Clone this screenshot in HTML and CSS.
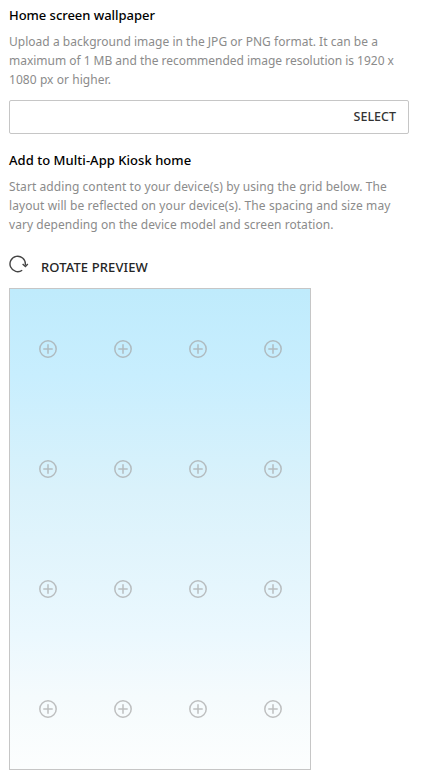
FILE: index.html
```html
<!DOCTYPE html>
<html lang="en">
<head>
<meta charset="utf-8">
<title>Multi-App Kiosk</title>
<link rel="stylesheet" href="styles.css">
</head>
<body>
<svg class="defs" width="0" height="0" aria-hidden="true">
  <symbol id="plus" viewBox="0 0 18 18">
    <circle cx="9" cy="9" r="8.2" fill="none" stroke="currentColor" stroke-width="1.5"/>
    <path d="M9 4.3v9.4M4.3 9h9.4" fill="none" stroke="currentColor" stroke-width="1.5"/>
  </symbol>
</svg>
<main class="panel">
  <section class="wallpaper">
    <h2 class="title"><span class="t1">Home screen wallpaper</span></h2>
    <p class="hint"><span class="a1">Upload a background image in the JPG or PNG format. It can be a</span><br><span class="a2">maximum of 1 MB and the recommended image resolution is 1920 x</span><br><span class="a3">1080 px or higher.</span></p>
    <div class="picker"><button class="select">SELECT</button></div>
  </section>
  <section>
    <h2 class="title"><span class="t2">Add to Multi-App Kiosk home</span></h2>
    <p class="hint"><span class="b1">Start adding content to your device(s) by using the grid below. The</span><br><span class="b2">layout will be reflected on your device(s). The spacing and size may</span><br><span class="b3">vary depending on the device model and screen rotation.</span></p>
    <button class="rotate">
      <svg class="rotate-icon" width="20" height="18" viewBox="0 0 20 18" fill="none" stroke="#444" stroke-width="1.4">
        <path d="M13.2 15.2A7.7 7.7 0 1 1 16.4 9v1.5"/>
        <path d="M13.6 9l2.8 2.6L18.8 9" />
      </svg>
      <span class="rotate-label">ROTATE PREVIEW</span>
    </button>
    <div class="preview">
      <svg><use href="#plus"/></svg><svg><use href="#plus"/></svg><svg><use href="#plus"/></svg><svg><use href="#plus"/></svg>
      <svg><use href="#plus"/></svg><svg><use href="#plus"/></svg><svg><use href="#plus"/></svg><svg><use href="#plus"/></svg>
      <svg><use href="#plus"/></svg><svg><use href="#plus"/></svg><svg><use href="#plus"/></svg><svg><use href="#plus"/></svg>
      <svg><use href="#plus"/></svg><svg><use href="#plus"/></svg><svg><use href="#plus"/></svg><svg><use href="#plus"/></svg>
    </div>
  </section>
</main>
</body>
</html>
```
FILE: styles.css
```css
* { box-sizing: border-box; }
body { margin: 0; background: #fff; font-family: "Noto Sans", sans-serif; }
.defs { display: block; }
.panel { width: 409px; padding: 5px 0 0 9px; }
.wallpaper { height: 145px; }
.title { margin: 0 0 7px; font-size: 13px; line-height: 20px; font-weight: 500; color: #000; white-space: nowrap; }
.hint { margin: 0; font-size: 12px; line-height: 19px; color: #8b8b8b; white-space: nowrap; }
.t1 { letter-spacing: -0.04px; }
.t2 { letter-spacing: 0.04px; }
.a1 { letter-spacing: 0.02px; }
.a2 { letter-spacing: -0.02px; }
.a3 { letter-spacing: 0.06px; }
.b1 { letter-spacing: 0.075px; }
.b2 { letter-spacing: 0.09px; }
.b3 { letter-spacing: 0.055px; }
.picker { display: flex; align-items: center; justify-content: flex-end; height: 34px; margin-top: 11px; padding: 0 12px 2px 0; border: 1px solid #c6c6c6; border-radius: 2px; }
button { padding: 0; border: 0; background: none; font-family: inherit; font-weight: 500; color: #252525; }
.select { font-size: 12.5px; color: #333; }
.rotate { display: flex; gap: 12px; height: 26px; margin-top: 21px; font-size: 13px; line-height: 24px; white-space: nowrap; }
.rotate-label { letter-spacing: 0.11px; }
.preview { display: grid; grid-template: repeat(4, 120px) / repeat(4, 75px); place-items: center; width: 302px; height: 482px; margin-top: 7px; border: 1px solid #c6c6c6; background: linear-gradient(#bfebfc, #c8eefe 18%, #daf2fb 42%, #ebf8fe 72%, #f5fbfd 85%, #fcfefe); color: rgb(165 165 165 / 70%); }
.preview svg { display: block; width: 18px; height: 18px; }
```
